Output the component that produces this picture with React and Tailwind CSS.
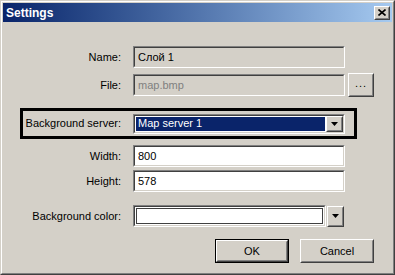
const sunkenOuter =
  "border border-t-[#808080] border-l-[#808080] border-b-white border-r-white";
const sunkenInner =
  "border border-t-[#404040] border-l-[#404040] border-b-[#d4d0c8] border-r-[#d4d0c8]";
const raisedOuter =
  "border border-t-white border-l-white border-b-[#404040] border-r-[#404040]";
const raisedInner =
  "border border-t-[#d4d0c8] border-l-[#d4d0c8] border-b-[#808080] border-r-[#808080]";

function Label({ children, width = "w-[119px]" }) {
  return (
    <div className={`${width} shrink-0 text-right pr-[1px] text-[11px] text-black`}>
      {children}
    </div>
  );
}

function TextBox({ value, disabled, muted, width = "w-[212px]" }) {
  return (
    <div className={`${width} h-[22px] ${sunkenOuter}`}>
      <div
        className={`h-full ${sunkenInner} ${disabled ? "bg-[#d4d0c8]" : "bg-white"} flex items-center pl-[3px] text-[11px] ${
          muted ? "text-[#808080]" : "text-black"
        }`}
      >
        {value}
      </div>
    </div>
  );
}

function Arrow() {
  return (
    <svg width="7" height="4" viewBox="0 0 7 4">
      <path d="M0 0h7L3.5 4z" fill="#000" />
    </svg>
  );
}

function DropButton({ className = "" }) {
  return (
    <div className={`w-[17px] h-full ${raisedOuter} ${className}`}>
      <div className={`h-full ${raisedInner} bg-[#d4d0c8] flex items-center justify-center`}>
        <Arrow />
      </div>
    </div>
  );
}

function Button({ children, isDefault, className = "" }) {
  const face = (
    <div className={`h-full ${raisedOuter}`}>
      <div className={`h-full ${raisedInner} bg-[#d4d0c8] flex items-center justify-center text-[11px] text-black`}>
        {children}
      </div>
    </div>
  );
  return (
    <div className={`h-[24px] ${isDefault ? "border border-black" : ""} ${className}`}>
      {face}
    </div>
  );
}

function Row({ children, className = "" }) {
  return <div className={`flex items-center ${className}`}>{children}</div>;
}

export default function App() {
  return (
    <div
      className="w-[395px] h-[275px] bg-[#d4d0c8] border border-t-[#d4d0c8] border-l-[#d4d0c8] border-b-[#404040] border-r-[#404040]"
      style={{ fontFamily: '"Liberation Sans", Arial, sans-serif' }}
    >
      <div className="h-full border border-t-white border-l-white border-b-[#808080] border-r-[#808080] p-[1px] flex flex-col">
        {/* title bar */}
        <div className="h-[19px] shrink-0 bg-gradient-to-r from-[#0a246a] to-[#a6caf0] flex items-center pl-[3px] pr-[2px]">
          <span className="text-white font-bold text-[12px] flex-1">Settings</span>
          <div className={`w-[16px] h-[14px] ${raisedOuter}`}>
            <div className={`h-full ${raisedInner} bg-[#d4d0c8] flex items-center justify-center`}>
              <svg width="8" height="7" viewBox="0 0 8 7">
                <path d="M0.5 0.5L7.5 6.5M7.5 0.5L0.5 6.5" stroke="#000" strokeWidth="1.6" />
              </svg>
            </div>
          </div>
        </div>

        <div className="flex flex-col pt-[24px]">
          <Row>
            <Label>Name:</Label>
            <div className="ml-[11px]">
              <TextBox value="Слой 1" disabled />
            </div>
          </Row>

          <Row className="mt-[5px]">
            <Label>File:</Label>
            <div className="ml-[11px]">
              <TextBox value="map.bmp" disabled muted />
            </div>
            <Button className="ml-[3px] w-[26px] h-[23px]">
              <span className="-mt-[3px] tracking-[1px]">...</span>
            </Button>
          </Row>

          <div className="mt-[11px] ml-[17px] w-[337px] h-[31px] border-[3px] border-black flex items-center">
            <Label width="w-[99px]">Background server:</Label>
            <div className={`ml-[11px] w-[212px] h-[20px] ${sunkenOuter}`}>
              <div className={`h-full ${sunkenInner} bg-white flex`}>
                <div className="flex-1 m-[1px] bg-[#0a246a] text-white text-[11px] flex items-center pl-[2px]">
                  Map server 1
                </div>
                <DropButton />
              </div>
            </div>
          </div>

          <Row className="mt-[6px]">
            <Label>Width:</Label>
            <div className="ml-[11px]">
              <TextBox value="800" />
            </div>
          </Row>

          <Row className="mt-[3px]">
            <Label>Height:</Label>
            <div className="ml-[11px]">
              <TextBox value="578" />
            </div>
          </Row>

          <Row className="mt-[13px]">
            <Label>Background color:</Label>
            <div className={`ml-[11px] w-[193px] h-[22px] ${sunkenOuter}`}>
              <div className={`h-full ${sunkenInner} bg-white p-[1px]`}>
                <div className="h-full border border-[#404040] bg-white" />
              </div>
            </div>
            <DropButton className="ml-[1px] !h-[21px]" />
          </Row>

          <div className="flex mt-[12px] ml-[212px] gap-[11px]">
            <Button isDefault className="w-[74px]">OK</Button>
            <Button className="w-[74px]">Cancel</Button>
          </div>
        </div>
      </div>
    </div>
  );
}
